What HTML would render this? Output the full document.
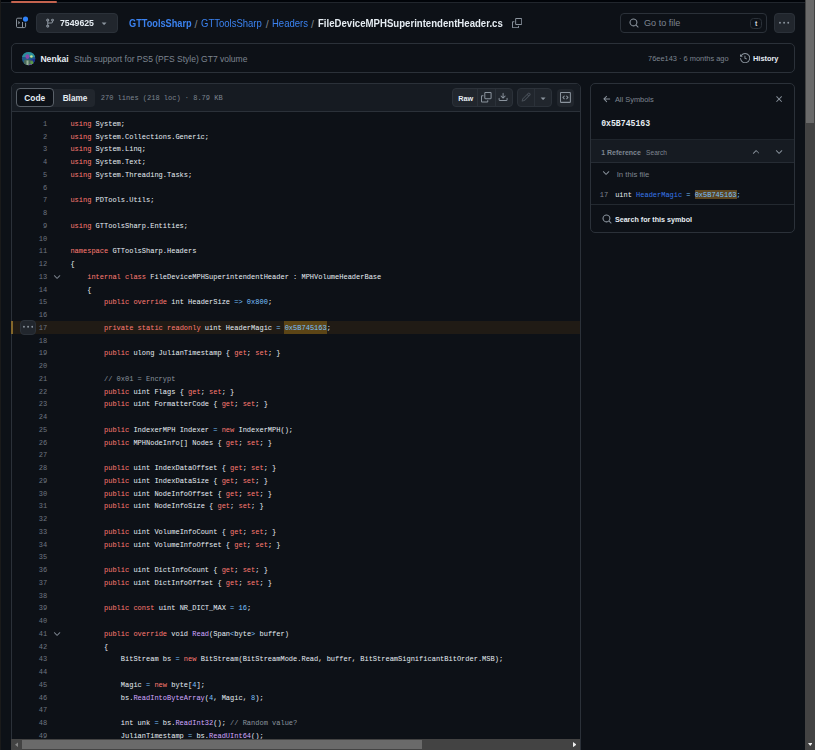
<!DOCTYPE html>
<html><head><meta charset="utf-8">
<style>
*{margin:0;padding:0;box-sizing:border-box}
html,body{width:815px;height:750px;overflow:hidden;background:#0d1117}
body{position:relative;font-family:"Liberation Sans",sans-serif;color:#e6edf3}
.a{position:absolute}
.t{position:absolute;white-space:pre;line-height:1}
.box{position:absolute;border:1px solid #2b3139;border-radius:4px}
.btn{position:absolute;background:#21262d;border:1px solid #2b3139;border-radius:4px}
svg{position:absolute;display:block}
.mono{font-family:"Liberation Mono",monospace}
/* code */
#code{position:absolute;left:12px;top:117.3px;width:568px}
.ln{position:relative;height:12.75px;line-height:12.75px;font-family:"Liberation Mono",monospace;font-size:7px;white-space:pre;color:#e6edf3}
.ln .num{position:absolute;top:0.6px;left:0;width:35.2px;text-align:right;color:#6e7681}
.ln .tx{position:absolute;top:0.6px;left:58.4px}
.ln b{font-weight:normal}
.k{color:#ff7b72}.f{color:#d2a8ff}.c{color:#79c0ff}.cm{color:#8b949e}
.hl{background:#201b15}
.sym{}
.fold{left:40.1px;top:1.5px}
.dots{position:absolute;left:8.2px;top:-1.6px;width:15.5px;height:15.5px;background:#21262d;border:1px solid #2b3139;border-radius:4px}
.ybar{position:absolute;left:-1.1px;top:0;width:2.2px;height:12.6px;background:#84672a}
</style></head><body>
<div class="a" style="left:0px;top:0px;width:815px;height:2px;background:#010409"></div>
<div class="a" style="left:0px;top:2px;width:815px;height:1px;background:#21262d"></div>
<div class="a" style="left:11px;top:1px;width:46px;height:2.2px;background:#c4634f;border-radius:1px"></div>
<div class="a" style="left:0px;top:0px;width:1.4px;height:750px;background:#1a1a1a"></div>
<svg style="left:0;top:0" width="40" height="40"><path d="M22 18.2H17.8A1.3 1.3 0 0 0 16.5 19.5V26.3A1.3 1.3 0 0 0 17.8 27.6H24.3A1.3 1.3 0 0 0 25.6 26.3V22.6M22.5 22v5.6" stroke="#8b949e" stroke-width="1" fill="none"/><path d="M18.3 20.8L20.1 22.65L18.3 24.5z" fill="#8b949e"/><circle cx="25.5" cy="19.1" r="3.2" fill="#0d1117"/><circle cx="25.5" cy="19.1" r="2.6" fill="#2f81f7"/></svg>
<div class="a" style="left:36px;top:13px;width:82px;height:20px;background:#21262d;border:1px solid #2b3139;border-radius:4px"></div>
<svg style="left:44.6px;top:18.2px" width="10.19" height="10.19" viewBox="0 0 16 16"><g fill="#8b949e"><path d="M9.5 3.25a2.25 2.25 0 1 1 3 2.122V6A2.5 2.5 0 0 1 10 8.5H6a1 1 0 0 0-1 1v1.128a2.251 2.251 0 1 1-1.5 0V5.372a2.25 2.25 0 1 1 1.5 0v1.836A2.493 2.493 0 0 1 6 7h4a1 1 0 0 0 1-1v-.628A2.25 2.25 0 0 1 9.5 3.25Zm-6 0a.75.75 0 1 0 1.5 0 .75.75 0 0 0-1.5 0Zm8.25-.75a.75.75 0 1 0 0 1.5.75.75 0 0 0 0-1.5ZM4.25 12a.75.75 0 1 0 0 1.5.75.75 0 0 0 0-1.5Z"/></g></svg>
<div class="t" style="left:60px;top:18.30px;font-size:9.8px;font-weight:700;color:#e6edf3;transform:scaleX(0.89);transform-origin:0 0;">7549625</div>
<svg style="left:98.7px;top:17.8px" width="10.19" height="10.19" viewBox="0 0 16 16"><g fill="#8b949e"><path d="m4.427 7.427 3.396 3.396a.25.25 0 0 0 .354 0l3.396-3.396A.25.25 0 0 0 11.396 7H4.604a.25.25 0 0 0-.177.427Z"/></g></svg>
<div class="t" style="left:128.6px;top:19.10px;font-size:10.1px;font-weight:700;color:#3b82f0;transform:scaleX(0.91);transform-origin:0 0;">GTToolsSharp</div>
<div class="t" style="left:194.6px;top:18.50px;font-size:10.6px;color:#7d8590;">/</div>
<div class="t" style="left:201px;top:19.10px;font-size:10.1px;color:#3b82f0;transform:scaleX(0.942);transform-origin:0 0;">GTToolsSharp</div>
<div class="t" style="left:265.7px;top:18.50px;font-size:10.6px;color:#7d8590;">/</div>
<div class="t" style="left:271.7px;top:19.10px;font-size:10.1px;color:#3b82f0;transform:scaleX(0.943);transform-origin:0 0;">Headers</div>
<div class="t" style="left:311.1px;top:18.50px;font-size:10.6px;color:#7d8590;">/</div>
<div class="t" style="left:318.3px;top:19.10px;font-size:10.1px;font-weight:700;color:#e6edf3;transform:scaleX(0.952);transform-origin:0 0;">FileDeviceMPHSuperintendentHeader.cs</div>
<svg style="left:512px;top:17.7px" width="10.19" height="10.19" viewBox="0 0 16 16"><g fill="#8b949e"><path d="M0 6.75C0 5.784.784 5 1.75 5h1.5a.75.75 0 0 1 0 1.5h-1.5a.25.25 0 0 0-.25.25v7.5c0 .138.112.25.25.25h7.5a.25.25 0 0 0 .25-.25v-1.5a.75.75 0 0 1 1.5 0v1.5A1.75 1.75 0 0 1 9.25 16h-7.5A1.75 1.75 0 0 1 0 14.25Z"/><path d="M5 1.75C5 .784 5.784 0 6.75 0h7.5C15.216 0 16 .784 16 1.75v7.5A1.75 1.75 0 0 1 14.25 11h-7.5A1.75 1.75 0 0 1 5 9.25Zm1.75-.25a.25.25 0 0 0-.25.25v7.5c0 .138.112.25.25.25h7.5a.25.25 0 0 0 .25-.25v-7.5a.25.25 0 0 0-.25-.25Z"/></g></svg>
<div class="a" style="left:620px;top:13px;width:147px;height:20px;border:1px solid #2b3139;border-radius:4px;background:#0d1117"></div>
<svg style="left:629.3px;top:18.2px" width="10.19" height="10.19" viewBox="0 0 16 16"><g fill="#8b949e"><path d="M10.68 11.74a6 6 0 0 1-7.922-8.982 6 6 0 0 1 8.982 7.922l3.04 3.04a.749.749 0 0 1-.326 1.275.749.749 0 0 1-.734-.215ZM11.5 7a4.499 4.499 0 1 0-8.997 0A4.499 4.499 0 0 0 11.5 7Z"/></g></svg>
<div class="t" style="left:644px;top:19.30px;font-size:9.1px;color:#7d8590;">Go to file</div>
<div class="a" style="left:750.3px;top:17.9px;width:11.8px;height:11px;border:1px solid #2b3139;border-radius:3.5px;background:#0d1117"></div>
<div class="t" style="left:755px;top:20.00px;font-size:7px;font-weight:700;color:#c9d1d9;">t</div>
<div class="a" style="left:774px;top:13px;width:20.5px;height:20px;background:#21262d;border:1px solid #2b3139;border-radius:4px"></div>
<svg style="left:779.4px;top:17.7px" width="10.19" height="10.19" viewBox="0 0 16 16"><g fill="#8b949e"><path d="M8 9a1.5 1.5 0 1 0 0-3 1.5 1.5 0 0 0 0 3ZM1.5 9a1.5 1.5 0 1 0 0-3 1.5 1.5 0 0 0 0 3Zm13 0a1.5 1.5 0 1 0 0-3 1.5 1.5 0 0 0 0 3Z"/></g></svg>
<div class="a" style="left:11px;top:43px;width:784px;height:30px;border:1px solid #2b3139;border-radius:5px"></div>
<svg style="left:21px;top:51px" width="16" height="16" viewBox="0 0 16 16"><defs><clipPath id="av"><circle cx="7.6" cy="7.6" r="6.7"/></clipPath><filter id="bl" x="-20%" y="-20%" width="140%" height="140%"><feGaussianBlur stdDeviation="0.45"/></filter></defs><g clip-path="url(#av)"><rect x="0" y="0" width="16" height="16" fill="#1f5a8a"/><rect x="0" y="0" width="16" height="6" fill="#2a8f9a" filter="url(#bl)"/><path d="M9 9L16 7V16H9z" fill="#1a2a9a" filter="url(#bl)"/><ellipse cx="6.4" cy="5.6" rx="2" ry="2.3" fill="#8a4aa8" filter="url(#bl)"/><circle cx="10.4" cy="5.5" r="1.3" fill="#c8e890" filter="url(#bl)"/><path d="M3 9.5L5 8.5L8.5 9L12 9.5L13 13L12 15H3z" fill="#4a6a5a" filter="url(#bl)"/><rect x="5.5" y="9.5" width="2" height="5" fill="#9ab09a" filter="url(#bl)"/><path d="M9.5 10l2.5 0.5 0.5 3.5h-3z" fill="#5a9a4a" filter="url(#bl)"/><rect x="8" y="13" width="4" height="2" fill="#6a4a9a" filter="url(#bl)"/></g></svg>
<div class="t" style="left:40.4px;top:55.00px;font-size:8.6px;font-weight:700;color:#e6edf3;">Nenkai</div>
<div class="t" style="left:74px;top:55.00px;font-size:8.5px;color:#7d8590;">Stub support for PS5 (PFS Style) GT7 volume</div>
<div class="t" style="left:648.1px;top:55.00px;font-size:7.43px;color:#7d8590;">76ee143 · 6 months ago</div>
<svg style="left:739.6px;top:53.25px" width="10.19" height="10.19" viewBox="0 0 16 16"><g fill="#8b949e"><path d="m.427 1.927 1.215 1.215a8.002 8.002 0 1 1-1.6 5.685.75.75 0 1 1 1.493-.154 6.5 6.5 0 1 0 1.18-4.458l1.358 1.358A.25.25 0 0 1 3.896 6H.25A.25.25 0 0 1 0 5.75V2.104a.25.25 0 0 1 .427-.177ZM7.75 4a.75.75 0 0 1 .75.75v2.992l2.028.812a.75.75 0 0 1-.557 1.392l-2.5-1A.751.751 0 0 1 7 8.25v-3.5A.75.75 0 0 1 7.75 4Z"/></g></svg>
<div class="t" style="left:753px;top:55.00px;font-size:7.4px;font-weight:700;color:#e6edf3;">History</div>
<div class="a" style="left:11px;top:83px;width:569.6px;height:700px;border:1px solid #2b3139;border-radius:5px"></div>
<div class="a" style="left:12px;top:84px;width:567.6px;height:27px;background:#161b22;border-radius:4px 4px 0 0"></div>
<div class="a" style="left:12px;top:111px;width:567.6px;height:1px;background:#2b3139"></div>
<div class="a" style="left:15.7px;top:88.5px;width:79px;height:18px;background:#21262d;border-radius:4px"></div>
<div class="a" style="left:15.7px;top:88px;width:38px;height:18.5px;background:#0d1117;border:1px solid #5a6169;border-radius:4px"></div>
<div class="t" style="left:24.3px;top:94.10px;font-size:8.4px;font-weight:700;color:#e6edf3;">Code</div>
<div class="t" style="left:62.7px;top:95.45px;font-size:8.2px;font-weight:700;color:#e6edf3;">Blame</div>
<div class="t" style="left:100.8px;top:94.80px;font-size:7px;color:#7d8590;font-family:'Liberation Mono',monospace;">270 lines (218 loc) · 8.79 KB</div>
<div class="a" style="left:452.2px;top:88.4px;width:60.4px;height:18.2px;background:#21262d;border:1px solid #2b3139;border-radius:4px"></div>
<div class="a" style="left:477px;top:88.4px;width:1px;height:18.2px;background:#2b3139"></div>
<div class="a" style="left:495px;top:88.4px;width:1px;height:18.2px;background:#2b3139"></div>
<div class="t" style="left:458.3px;top:94.70px;font-size:7.3px;font-weight:700;color:#e6edf3;">Raw</div>
<svg style="left:481.2px;top:92px" width="10.6" height="10.6" viewBox="0 0 16 16"><g fill="#8b949e"><path d="M0 6.75C0 5.784.784 5 1.75 5h1.5a.75.75 0 0 1 0 1.5h-1.5a.25.25 0 0 0-.25.25v7.5c0 .138.112.25.25.25h7.5a.25.25 0 0 0 .25-.25v-1.5a.75.75 0 0 1 1.5 0v1.5A1.75 1.75 0 0 1 9.25 16h-7.5A1.75 1.75 0 0 1 0 14.25Z"/><path d="M5 1.75C5 .784 5.784 0 6.75 0h7.5C15.216 0 16 .784 16 1.75v7.5A1.75 1.75 0 0 1 14.25 11h-7.5A1.75 1.75 0 0 1 5 9.25Zm1.75-.25a.25.25 0 0 0-.25.25v7.5c0 .138.112.25.25.25h7.5a.25.25 0 0 0 .25-.25v-7.5a.25.25 0 0 0-.25-.25Z"/></g></svg>
<svg style="left:498.3px;top:92.1px" width="10.19" height="10.19" viewBox="0 0 16 16"><g fill="#8b949e"><path d="M2.75 14A1.75 1.75 0 0 1 1 12.25v-2.5a.75.75 0 0 1 1.5 0v2.5c0 .138.112.25.25.25h10.5a.25.25 0 0 0 .25-.25v-2.5a.75.75 0 0 1 1.5 0v2.5A1.75 1.75 0 0 1 13.25 14Z"/><path d="M7.25 7.689V2a.75.75 0 0 1 1.5 0v5.689l1.97-1.969a.749.749 0 1 1 1.06 1.06l-3.25 3.25a.749.749 0 0 1-1.06 0L4.22 6.78a.749.749 0 1 1 1.06-1.06l1.97 1.969Z"/></g></svg>
<div class="a" style="left:517.1px;top:88.4px;width:34.8px;height:18.2px;background:#21262d;border:1px solid #2b3139;border-radius:4px"></div>
<div class="a" style="left:534.2px;top:88.4px;width:1px;height:18.2px;background:#2b3139"></div>
<svg style="left:521.2px;top:92.2px" width="10.19" height="10.19" viewBox="0 0 16 16"><g fill="#484f58"><path d="M11.013 1.427a1.75 1.75 0 0 1 2.474 0l1.086 1.086a1.75 1.75 0 0 1 0 2.474l-8.61 8.61c-.21.21-.47.364-.756.445l-3.251.93a.75.75 0 0 1-.927-.928l.929-3.25c.081-.286.235-.547.445-.758l8.61-8.61Zm.176 4.823L9.75 4.81l-6.286 6.287a.253.253 0 0 0-.064.108l-.558 1.953 1.953-.558a.253.253 0 0 0 .108-.064Zm1.238-3.763a.25.25 0 0 0-.354 0L10.811 3.75l1.439 1.44 1.263-1.263a.25.25 0 0 0 0-.354Z"/></g></svg>
<svg style="left:538.25px;top:92.7px" width="10.19" height="10.19" viewBox="0 0 16 16"><g fill="#8b949e"><path d="m4.427 7.427 3.396 3.396a.25.25 0 0 0 .354 0l3.396-3.396A.25.25 0 0 0 11.396 7H4.604a.25.25 0 0 0-.177.427Z"/></g></svg>
<div class="a" style="left:556.8px;top:88.8px;width:17.6px;height:17.8px;background:#21262d;border-radius:4px"></div>
<svg style="left:560.1px;top:92px" width="10.9" height="10.9" viewBox="0 0 16 16"><g fill="#8b949e"><path d="M0 1.75C0 .784.784 0 1.75 0h12.5C15.216 0 16 .784 16 1.75v12.5A1.75 1.75 0 0 1 14.25 16H1.75A1.75 1.75 0 0 1 0 14.25Zm1.75-.25a.25.25 0 0 0-.25.25v12.5c0 .138.112.25.25.25h12.5a.25.25 0 0 0 .25-.25V1.75a.25.25 0 0 0-.25-.25Zm7.47 3.97a.75.75 0 0 1 1.06 0l2 2a.75.75 0 0 1 0 1.06l-2 2a.749.749 0 0 1-1.275-.326.749.749 0 0 1 .215-.734L10.69 8 9.22 6.53a.75.75 0 0 1 0-1.06ZM6.78 6.53 5.31 8l1.47 1.47a.749.749 0 0 1-.326 1.275.749.749 0 0 1-.734-.215l-2-2a.75.75 0 0 1 0-1.06l2-2a.751.751 0 0 1 1.042.018.751.751 0 0 1 .018 1.042Z"/></g></svg>
<div id="code"><div class="ln"><span class="num">1</span><span class="tx"><b class="k">using</b> System;</span></div>
<div class="ln"><span class="num">2</span><span class="tx"><b class="k">using</b> System.Collections.Generic;</span></div>
<div class="ln"><span class="num">3</span><span class="tx"><b class="k">using</b> System.Linq;</span></div>
<div class="ln"><span class="num">4</span><span class="tx"><b class="k">using</b> System.Text;</span></div>
<div class="ln"><span class="num">5</span><span class="tx"><b class="k">using</b> System.Threading.Tasks;</span></div>
<div class="ln"><span class="num">6</span><span class="tx"></span></div>
<div class="ln"><span class="num">7</span><span class="tx"><b class="k">using</b> PDTools.Utils;</span></div>
<div class="ln"><span class="num">8</span><span class="tx"></span></div>
<div class="ln"><span class="num">9</span><span class="tx"><b class="k">using</b> GTToolsSharp.Entities;</span></div>
<div class="ln"><span class="num">10</span><span class="tx"></span></div>
<div class="ln"><span class="num">11</span><span class="tx"><b class="k">namespace</b> GTToolsSharp.Headers</span></div>
<div class="ln"><span class="num">12</span><span class="tx">{</span></div>
<div class="ln"><svg class="fold" width="10.19" height="10.19" viewBox="0 0 16 16"><path fill="#7d8590" d="M12.78 5.22a.749.749 0 0 1 0 1.06l-4.25 4.25a.749.749 0 0 1-1.06 0L3.22 6.28a.749.749 0 1 1 1.06-1.06L8 8.939l3.72-3.719a.749.749 0 0 1 1.06 0Z"/></svg><span class="num">13</span><span class="tx">    <b class="k">internal</b> <b class="k">class</b> FileDeviceMPHSuperintendentHeader : MPHVolumeHeaderBase</span></div>
<div class="ln"><span class="num">14</span><span class="tx">    {</span></div>
<div class="ln"><span class="num">15</span><span class="tx">        <b class="k">public</b> <b class="k">override</b> int HeaderSize <b class="c">=&gt;</b> <b class="c">0x800</b>;</span></div>
<div class="ln"><span class="num">16</span><span class="tx"></span></div>
<div class="ln hl"><span class="ybar"></span><span class="dots"></span><svg style="left:10.75px;top:0.9px" width="10.19" height="10.19" viewBox="0 0 16 16"><path fill="#8b949e" d="M8 9a1.5 1.5 0 1 0 0-3 1.5 1.5 0 0 0 0 3ZM1.5 9a1.5 1.5 0 1 0 0-3 1.5 1.5 0 0 0 0 3Zm13 0a1.5 1.5 0 1 0 0-3 1.5 1.5 0 0 0 0 3Z"/></svg><span style="position:absolute;left:272.2px;top:-0.2px;width:42.7px;height:12.6px;background:#5c4516"></span><span class="num">17</span><span class="tx">        <b class="k">private</b> <b class="k">static</b> <b class="k">readonly</b> uint HeaderMagic <b class="c">=</b> <b class="c sym">0x5B745163</b>;</span></div>
<div class="ln"><span class="num">18</span><span class="tx"></span></div>
<div class="ln"><span class="num">19</span><span class="tx">        <b class="k">public</b> ulong JulianTimestamp { <b class="k">get</b>; <b class="k">set</b>; }</span></div>
<div class="ln"><span class="num">20</span><span class="tx"></span></div>
<div class="ln"><span class="num">21</span><span class="tx">        <b class="cm">// 0x01 = Encrypt</b></span></div>
<div class="ln"><span class="num">22</span><span class="tx">        <b class="k">public</b> uint Flags { <b class="k">get</b>; <b class="k">set</b>; }</span></div>
<div class="ln"><span class="num">23</span><span class="tx">        <b class="k">public</b> uint FormatterCode { <b class="k">get</b>; <b class="k">set</b>; }</span></div>
<div class="ln"><span class="num">24</span><span class="tx"></span></div>
<div class="ln"><span class="num">25</span><span class="tx">        <b class="k">public</b> IndexerMPH Indexer <b class="c">=</b> <b class="k">new</b> IndexerMPH();</span></div>
<div class="ln"><span class="num">26</span><span class="tx">        <b class="k">public</b> MPHNodeInfo[] Nodes { <b class="k">get</b>; <b class="k">set</b>; }</span></div>
<div class="ln"><span class="num">27</span><span class="tx"></span></div>
<div class="ln"><span class="num">28</span><span class="tx">        <b class="k">public</b> uint IndexDataOffset { <b class="k">get</b>; <b class="k">set</b>; }</span></div>
<div class="ln"><span class="num">29</span><span class="tx">        <b class="k">public</b> uint IndexDataSize { <b class="k">get</b>; <b class="k">set</b>; }</span></div>
<div class="ln"><span class="num">30</span><span class="tx">        <b class="k">public</b> uint NodeInfoOffset { <b class="k">get</b>; <b class="k">set</b>; }</span></div>
<div class="ln"><span class="num">31</span><span class="tx">        <b class="k">public</b> uint NodeInfoSize { <b class="k">get</b>; <b class="k">set</b>; }</span></div>
<div class="ln"><span class="num">32</span><span class="tx"></span></div>
<div class="ln"><span class="num">33</span><span class="tx">        <b class="k">public</b> uint VolumeInfoCount { <b class="k">get</b>; <b class="k">set</b>; }</span></div>
<div class="ln"><span class="num">34</span><span class="tx">        <b class="k">public</b> uint VolumeInfoOffset { <b class="k">get</b>; <b class="k">set</b>; }</span></div>
<div class="ln"><span class="num">35</span><span class="tx"></span></div>
<div class="ln"><span class="num">36</span><span class="tx">        <b class="k">public</b> uint DictInfoCount { <b class="k">get</b>; <b class="k">set</b>; }</span></div>
<div class="ln"><span class="num">37</span><span class="tx">        <b class="k">public</b> uint DictInfoOffset { <b class="k">get</b>; <b class="k">set</b>; }</span></div>
<div class="ln"><span class="num">38</span><span class="tx"></span></div>
<div class="ln"><span class="num">39</span><span class="tx">        <b class="k">public</b> <b class="k">const</b> uint NR_DICT_MAX <b class="c">=</b> <b class="c">16</b>;</span></div>
<div class="ln"><span class="num">40</span><span class="tx"></span></div>
<div class="ln"><svg class="fold" width="10.19" height="10.19" viewBox="0 0 16 16"><path fill="#7d8590" d="M12.78 5.22a.749.749 0 0 1 0 1.06l-4.25 4.25a.749.749 0 0 1-1.06 0L3.22 6.28a.749.749 0 1 1 1.06-1.06L8 8.939l3.72-3.719a.749.749 0 0 1 1.06 0Z"/></svg><span class="num">41</span><span class="tx">        <b class="k">public</b> <b class="k">override</b> void <b class="f">Read</b>(Span<b class="c">&lt;</b>byte<b class="c">&gt;</b> buffer)</span></div>
<div class="ln"><span class="num">42</span><span class="tx">        {</span></div>
<div class="ln"><span class="num">43</span><span class="tx">            BitStream bs <b class="c">=</b> <b class="k">new</b> BitStream(BitStreamMode.Read, buffer, BitStreamSignificantBitOrder.MSB);</span></div>
<div class="ln"><span class="num">44</span><span class="tx"></span></div>
<div class="ln"><span class="num">45</span><span class="tx">            Magic <b class="c">=</b> <b class="k">new</b> byte[<b class="c">4</b>];</span></div>
<div class="ln"><span class="num">46</span><span class="tx">            bs.<b class="f">ReadIntoByteArray</b>(<b class="c">4</b>, Magic, <b class="c">8</b>);</span></div>
<div class="ln"><span class="num">47</span><span class="tx"></span></div>
<div class="ln"><span class="num">48</span><span class="tx">            int unk <b class="c">=</b> bs.<b class="f">ReadInt32</b>(); <b class="cm">// Random value?</b></span></div>
<div class="ln"><span class="num">49</span><span class="tx">            JulianTimestamp <b class="c">=</b> bs.<b class="f">ReadUInt64</b>();</span></div></div>
<div class="a" style="left:11px;top:739px;width:569px;height:11px;background:#434343"></div>
<div class="a" style="left:22px;top:740.4px;width:400px;height:8.2px;background:#6a6a6a"></div>
<svg style="left:14.5px;top:741.8px" width="3.5" height="5.5" viewBox="0 0 4 6"><path d="M4 0v6L0 3z" fill="#858585"/></svg>
<svg style="left:572.8px;top:742px" width="3.5" height="5.2" viewBox="0 0 4 6"><path d="M0 0v6l4-3z" fill="#f0f0f0"/></svg>
<div class="a" style="left:805px;top:0px;width:10px;height:750px;background:#434343"></div>
<div class="a" style="left:805.5px;top:0px;width:8.7px;height:122.8px;background:#6a6a6a"></div>
<svg style="left:807.8px;top:742.7px" width="4.5" height="3" viewBox="0 0 6 4"><path d="M0 0h6L3 4z" fill="#f0f0f0"/></svg>
<div class="a" style="left:590.2px;top:83.2px;width:204.4px;height:149.4px;border:1px solid #2b3139;border-radius:5px"></div>
<div class="a" style="left:591.2px;top:139.1px;width:202.4px;height:23.9px;background:#161b22;border-top:1px solid #1f252c;border-bottom:1px solid #262c34"></div>
<div class="a" style="left:591.2px;top:203.6px;width:202.4px;height:1px;background:#232930"></div>
<svg style="left:601.9px;top:94.45px" width="10.19" height="10.19" viewBox="0 0 16 16"><g fill="#8b949e"><path d="M7.78 12.53a.75.75 0 0 1-1.06 0L2.47 8.28a.75.75 0 0 1 0-1.06l4.25-4.25a.751.751 0 0 1 1.042.018.751.751 0 0 1 .018 1.042L4.81 7h7.44a.75.75 0 0 1 0 1.5H4.81l2.97 2.97a.75.75 0 0 1 0 1.06Z"/></g></svg>
<div class="t" style="left:614.9px;top:95.80px;font-size:7.45px;color:#7d8590;">All Symbols</div>
<svg style="left:773.5px;top:93.7px" width="10.19" height="10.19" viewBox="0 0 16 16"><g fill="#8b949e"><path d="M3.72 3.72a.75.75 0 0 1 1.06 0L8 6.94l3.22-3.22a.749.749 0 0 1 1.275.326.749.749 0 0 1-.215.734L9.06 8l3.22 3.22a.749.749 0 0 1-.326 1.275.749.749 0 0 1-.734-.215L8 9.06l-3.22 3.22a.751.751 0 0 1-1.042-.018.751.751 0 0 1-.018-1.042L6.94 8 3.72 4.78a.75.75 0 0 1 0-1.06Z"/></g></svg>
<div class="t" style="left:601.2px;top:119.70px;font-size:8.17px;font-weight:700;color:#e6edf3;font-family:'Liberation Mono',monospace;">0x5B745163</div>
<div class="t" style="left:601.2px;top:149.00px;font-size:7px;font-weight:700;color:#7d8590;">1 Reference</div>
<div class="t" style="left:646.1px;top:150.00px;font-size:6.6px;color:#7d8590;">Search</div>
<svg style="left:750.5px;top:146.5px" width="10.19" height="10.19" viewBox="0 0 16 16"><g fill="#8b949e"><path d="M3.22 10.53a.749.749 0 0 1 0-1.06l4.25-4.25a.749.749 0 0 1 1.06 0l4.25 4.25a.749.749 0 0 1-1.275.326.749.749 0 0 1-.215-.734L8 6.81 4.28 10.53a.75.75 0 0 1-1.06 0Z"/></g></svg>
<svg style="left:773.5px;top:146.5px" width="10.19" height="10.19" viewBox="0 0 16 16"><g fill="#8b949e"><path d="M12.78 5.22a.749.749 0 0 1 0 1.06l-4.25 4.25a.749.749 0 0 1-1.06 0L3.22 6.28a.749.749 0 1 1 1.06-1.06L8 8.939l3.72-3.719a.749.749 0 0 1 1.06 0Z"/></g></svg>
<svg style="left:600.7px;top:168px" width="10.19" height="10.19" viewBox="0 0 16 16"><g fill="#8b949e"><path d="M12.78 5.22a.749.749 0 0 1 0 1.06l-4.25 4.25a.749.749 0 0 1-1.06 0L3.22 6.28a.749.749 0 1 1 1.06-1.06L8 8.939l3.72-3.719a.749.749 0 0 1 1.06 0Z"/></g></svg>
<div class="t" style="left:616.7px;top:171.40px;font-size:7.74px;color:#7d8590;">In this file</div>
<div class="t" style="left:599.8px;top:191.90px;font-size:6.97px;color:#7d8590;font-family:'Liberation Mono',monospace;">17</div>
<div class="a" style="left:694.7px;top:189.7px;width:42.7px;height:9.1px;background:#5b4520"></div>
<div class="t" style="left:615.2px;top:191.90px;font-size:6.97px;color:#e6edf3;font-family:'Liberation Mono',monospace;">uint <span style="color:#3878ea">HeaderMagic</span> <span style="color:#79c0ff">=</span> <span style="color:#79c0ff">0x5B745163;</span></div>
<svg style="left:602.1px;top:214.2px" width="10.19" height="10.19" viewBox="0 0 16 16"><g fill="#8b949e"><path d="M10.68 11.74a6 6 0 0 1-7.922-8.982 6 6 0 0 1 8.982 7.922l3.04 3.04a.749.749 0 0 1-.326 1.275.749.749 0 0 1-.734-.215ZM11.5 7a4.499 4.499 0 1 0-8.997 0A4.499 4.499 0 0 0 11.5 7Z"/></g></svg>
<div class="t" style="left:614.9px;top:217.00px;font-size:7.16px;font-weight:700;color:#e6edf3;">Search for this symbol</div>
</body></html>
